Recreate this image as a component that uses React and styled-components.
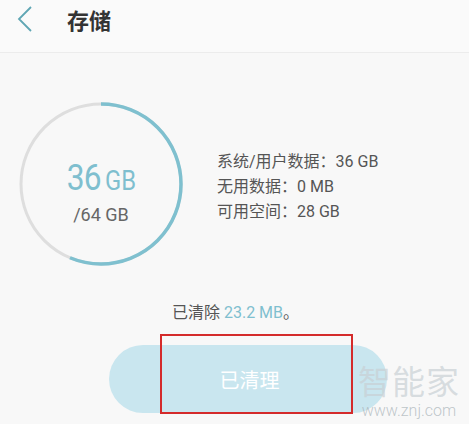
import React from "react";
import styled, { createGlobalStyle } from "styled-components";

const GlobalStyle = createGlobalStyle`
  html, body {
    margin: 0;
    padding: 0;
    background: #f8f8f8;
    font-family: Roboto, "Noto Sans CJK SC", sans-serif;
  }
`;

const Page = styled.div`
  position: relative;
  width: 469px;
  height: 424px;
  overflow: hidden;
  background: #f8f8f8;
`;

const Header = styled.div`
  display: flex;
  align-items: center;
  height: 38px;
  padding: 0 0 14px 14px;
  border-bottom: 1px solid #ececec;
  background: #fafafa;
`;

const BackButton = styled.div`
  display: flex;
  width: 22px;
  height: 28px;
  margin-right: 31px;
`;

const Title = styled.h1`
  margin: 0;
  font-size: 22px;
  font-weight: 700;
  color: #333;
`;

const Summary = styled.div`
  display: flex;
  align-items: center;
  padding: 49px 0 0 19px;
`;

const Gauge = styled.div`
  position: relative;
  width: 164px;
  height: 164px;
  flex-shrink: 0;
`;

const GaugeText = styled.div`
  position: absolute;
  inset: 0;
  display: flex;
  flex-direction: column;
  align-items: center;
  justify-content: center;
  padding-top: 16px;
`;

const Used = styled.div`
  color: #7fbfcf;
  font-size: 36px;
  line-height: 38px;
  letter-spacing: -1px;
  transform: scaleX(0.88);
`;

const Unit = styled.span`
  font-size: 27px;
  margin-left: 5px;
  letter-spacing: 0;
`;

const Total = styled.div`
  color: #666;
  font-size: 18px;
  margin-top: 4px;
`;

const InfoList = styled.div`
  display: flex;
  flex-direction: column;
  margin-left: 34px;
  margin-top: 4px;
`;

const InfoRow = styled.div`
  font-size: 16px;
  line-height: 25px;
  color: #555;
`;

const Cleared = styled.div`
  text-align: center;
  margin-top: 33px;
  padding-left: 2px;
  font-size: 16px;
  color: #555;
`;

const Highlight = styled.span`
  color: #7fbfcf;
`;

const ButtonWrap = styled.div`
  display: flex;
  justify-content: flex-start;
  padding-left: 109px;
  margin-top: 22px;
`;

const CleanButton = styled.button`
  width: 278px;
  height: 68px;
  border: none;
  border-radius: 34px;
  background: #c9e6ef;
  color: #fff;
  font-size: 20px;
  font-family: inherit;
  padding: 0 0 0 3px;
`;

const Highlighter = styled.div`
  position: absolute;
  left: 160px;
  top: 334px;
  width: 189px;
  height: 76px;
  border: 2px solid #d42b2b;
`;

const Watermark = styled.div`
  position: absolute;
  left: 358px;
  top: 364px;
  width: 102px;
  display: flex;
  flex-direction: column;
  align-items: center;
  color: rgba(200, 208, 212, 0.7);
`;

const MarkName = styled.div`
  font-size: 33px;
  line-height: 38px;
  letter-spacing: 1px;
`;

const MarkUrl = styled.div`
  font-size: 16px;
  line-height: 18px;
  font-weight: 300;
  color: rgba(170, 180, 185, 0.75);
`;

const R = 80;
const C = 2 * Math.PI * R;
const usedPart = 36 / 64;

export default function App() {
  return (
    <>
      <GlobalStyle />
      <Page>
        <Header>
          <BackButton>
            <svg width="22" height="28" viewBox="0 0 22 28">
              <path d="M17 2 L5 14 L17 26" fill="none" stroke="#5fa6b4" strokeWidth="1.8" />
            </svg>
          </BackButton>
          <Title>存储</Title>
        </Header>
        <Summary>
          <Gauge>
            <svg width="164" height="164" viewBox="0 0 164 164">
              <circle cx="82" cy="82" r={R} fill="none" stroke="#dedede" strokeWidth="3" />
              <circle
                cx="82"
                cy="82"
                r={R}
                fill="none"
                stroke="#7fc0cf"
                strokeWidth="3.5"
                strokeDasharray={`${C * usedPart} ${C}`}
                transform="rotate(-90 82 82)"
              />
            </svg>
            <GaugeText>
              <Used>
                36<Unit>GB</Unit>
              </Used>
              <Total>/64 GB</Total>
            </GaugeText>
          </Gauge>
          <InfoList>
            <InfoRow>系统/用户数据：36 GB</InfoRow>
            <InfoRow>无用数据：0 MB</InfoRow>
            <InfoRow>可用空间：28 GB</InfoRow>
          </InfoList>
        </Summary>
        <Cleared>
          已清除 <Highlight>23.2 MB</Highlight>。
        </Cleared>
        <ButtonWrap>
          <CleanButton>已清理</CleanButton>
        </ButtonWrap>
        <Highlighter />
        <Watermark>
          <MarkName>智能家</MarkName>
          <MarkUrl>www.znj.com</MarkUrl>
        </Watermark>
      </Page>
    </>
  );
}
